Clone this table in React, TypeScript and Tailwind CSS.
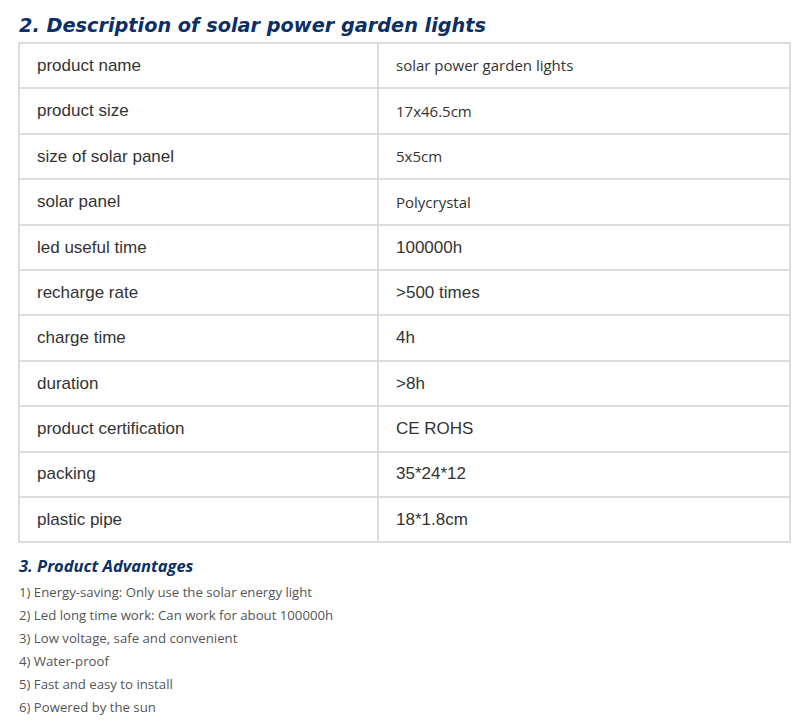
import React from "react";

const rows: [string, string, boolean][] = [
  ["product name", "solar power garden lights", true],
  ["product size", "17x46.5cm", true],
  ["size of solar panel", "5x5cm", true],
  ["solar panel", "Polycrystal", true],
  ["led useful time", "100000h", false],
  ["recharge rate", ">500 times", false],
  ["charge time", "4h", false],
  ["duration", ">8h", false],
  ["product certification", "CE ROHS", false],
  ["packing", "35*24*12", false],
  ["plastic pipe", "18*1.8cm", false],
];

const adv = [
  "1) Energy-saving: Only use the solar energy light",
  "2) Led long time work: Can work for about 100000h",
  "3) Low voltage, safe and convenient",
  "4) Water-proof",
  "5) Fast and easy to install",
  "6) Powered by the sun",
];

export default function App() {
  return (
    <div className="w-[800px] h-[727px] bg-white overflow-hidden">
      <h2 className="ml-[19px] pt-[12px] h-[42px] text-[19.3px] leading-[28px] font-bold italic text-[#0b2f66] [font-family:'DejaVu_Sans',sans-serif]">
        2. Description of solar power garden lights
      </h2>
      <table className="ml-[18px] w-[773px] border-collapse border-2 border-[#dcdcdc]">
        <tbody>
          {rows.map(([k, v, cal]) => (
            <tr key={k} className="h-[45.4px]">
              <td className="w-[359px] border-2 border-[#dcdcdc] pl-[17px] align-middle text-[17px] text-[#333] [font-family:'Liberation_Sans',Arial,sans-serif]">
                {k}
              </td>
              <td
                className={
                  cal
                    ? "border-2 border-[#dcdcdc] pl-[17px] align-middle text-[15px] text-[#333] [font-family:'Open_Sans',sans-serif]"
                    : "border-2 border-[#dcdcdc] pl-[17px] align-middle text-[17px] text-[#333] [font-family:'Liberation_Sans',Arial,sans-serif]"
                }
              >
                {v}
              </td>
            </tr>
          ))}
        </tbody>
      </table>
      <div className="ml-[19px] mt-[12px] text-[16.5px] leading-[22px] font-bold italic text-[#0b2f66] [font-family:'Open_Sans',sans-serif]">
        3. Product Advantages
      </div>
      <ul className="ml-[19px] mt-[4px] text-[13.2px] leading-[23px] text-[#555] [font-family:'Open_Sans',sans-serif]">
        {adv.map((a) => (
          <li key={a}>{a}</li>
        ))}
      </ul>
    </div>
  );
}
